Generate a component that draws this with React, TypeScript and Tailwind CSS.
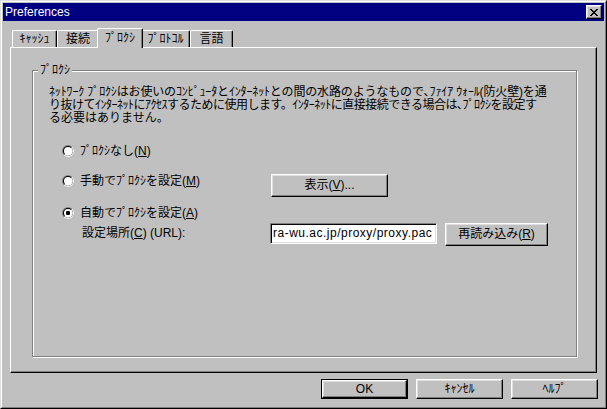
import React from 'react';

const font = "font-['Liberation_Sans','Noto_Sans_CJK_JP',sans-serif]";

// raised 3D button (Win9x style)
function Btn({ children, className = '', isDefault = false }: { children: React.ReactNode; className?: string; isDefault?: boolean }) {
  const face = (
    <div className="flex-1 flex items-center justify-center border border-t-white border-l-white border-r-black border-b-black bg-[#c0c0c0] shadow-[inset_-1px_-1px_0_#808080,inset_1px_1px_0_#dfdfdf] leading-[13px]">
      {children}
    </div>
  );
  if (isDefault) {
    return <div className={`flex border border-black ${className}`}>{face}</div>;
  }
  return <div className={`flex ${className}`}>{face}</div>;
}

function Radio({ checked = false }: { checked?: boolean }) {
  return (
    <svg width="12" height="12" viewBox="0 0 12 12" className="shrink-0">
      <defs>
        <clipPath id="radio-br">
          <polygon points="12,0 12,12 0,12" />
        </clipPath>
      </defs>
      <circle cx="6" cy="6" r="6" fill="#808080" />
      <circle cx="6" cy="6" r="6" fill="#ffffff" clipPath="url(#radio-br)" />
      <circle cx="6" cy="6" r="5" fill="#000000" />
      <circle cx="6" cy="6" r="5" fill="#dfdfdf" clipPath="url(#radio-br)" />
      <circle cx="6" cy="6" r="4" fill="#ffffff" />
      {checked && <rect x="4" y="4" width="4" height="4" rx="1.2" fill="#000000" />}
    </svg>
  );
}

const U = ({ c }: { c: string }) => <span className="underline underline-offset-[1px]">{c}</span>;

const tabs = [
  { label: 'ｷｬｯｼｭ', w: 'w-[45px]' },
  { label: '接続', w: 'w-[42px]' },
  { label: 'ﾌﾟﾛｸｼ', w: 'w-[46px]', active: true },
  { label: 'ﾌﾟﾛﾄｺﾙ', w: 'w-[49px]' },
  { label: '言語', w: 'w-[43px]' },
];

export default function App() {
  return (
    <div className={`w-[607px] h-[409px] bg-[#c0c0c0] text-[12px] text-black ${font} border border-t-[#dfdfdf] border-l-[#dfdfdf] border-r-black border-b-black`}>
      <div className="w-full h-full flex flex-col border border-t-white border-l-white border-r-[#808080] border-b-[#808080] p-px">
        {/* Title bar */}
        <div className="h-[18px] shrink-0 bg-[#000080] flex items-center justify-between pl-[2px] pr-[2px]">
          <span className="text-white text-[12px] leading-[14px]">Preferences</span>
          <div className="w-[16px] h-[14px] flex items-center justify-center border border-t-white border-l-white border-r-black border-b-black bg-[#c0c0c0] shadow-[inset_-1px_-1px_0_#808080,inset_1px_1px_0_#dfdfdf]">
            <svg width="8" height="7" viewBox="0 0 8 7" shapeRendering="crispEdges">
              <path
                fill="#000"
                d="M0 0h2v1H0zM6 0h2v1H6zM1 1h2v1H1zM5 1h2v1H5zM2 2h4v1H2zM3 3h2v1H3zM2 4h4v1H2zM1 5h2v1H1zM5 5h2v1H5zM0 6h2v1H0zM6 6h2v1H6z"
              />
            </svg>
          </div>
        </div>

        <div className="flex-1 flex flex-col px-[7px] pt-[7px]">
          {/* Tabs */}
          <div className="h-[19px] flex items-end pl-[2px]">
            {tabs.map((t) =>
              t.active ? (
                <div
                  key={t.label}
                  className={`${t.w} -mx-[2px] h-[20px] -mb-px relative z-10 bg-[#c0c0c0] border-t border-l border-r border-t-white border-l-white border-r-black rounded-t-[2px] shadow-[inset_-1px_0_0_#808080] flex items-center justify-center leading-[13px] pb-[1px]`}
                >
                  {t.label}
                </div>
              ) : (
                <div
                  key={t.label}
                  className={`${t.w} h-[17px] bg-[#c0c0c0] border-t border-l border-r border-t-white border-l-white border-r-black rounded-t-[2px] shadow-[inset_-1px_0_0_#808080] flex items-center justify-center leading-[13px]`}
                >
                  {t.label}
                </div>
              )
            )}
          </div>

          {/* Tab panel */}
          <div className="h-[326px] flex flex-col border border-t-white border-l-white border-r-black border-b-black shadow-[inset_-1px_-1px_0_#808080] pl-[21px] pt-[22px] pr-[19px] pb-[15px]">
            <div className="flex-1 relative border border-[#808080] shadow-[inset_1px_1px_0_#fff,1px_1px_0_#fff] pl-[16px] pt-[15px]">
              <span className="absolute left-[5px] top-[-7px] px-[2px] bg-[#c0c0c0] leading-[13px]">ﾌﾟﾛｸｼ</span>

              <div className="leading-[13px] whitespace-nowrap">
                <div className="tracking-[-0.15px]">ﾈｯﾄﾜｰｸ ﾌﾟﾛｸｼはお使いのｺﾝﾋﾟｭｰﾀとｲﾝﾀｰﾈｯﾄとの間の水路のようなもので､ﾌｧｲｱ ｳｫｰﾙ(防火壁)を通</div>
                <div className="tracking-[-0.5px]">り抜けてｲﾝﾀｰﾈｯﾄにｱｸｾｽするために使用します。ｲﾝﾀｰﾈｯﾄに直接接続できる場合は､ﾌﾟﾛｸｼを設定す</div>
                <div>る必要はありません。</div>
              </div>

              <div className="ml-[13px] mt-[16px] flex flex-col">
                <div className="h-[20px] flex items-center gap-[6px]">
                  <Radio />
                  <span className="leading-[13px]">
                    ﾌﾟﾛｸｼなし(<U c="N" />)
                  </span>
                </div>

                <div className="mt-[10px] flex items-start">
                  <div className="w-[209px] h-[20px] flex items-center gap-[6px]">
                    <Radio />
                    <span className="leading-[13px]">
                      手動でﾌﾟﾛｸｼを設定(<U c="M" />)
                    </span>
                  </div>
                  <Btn className="w-[117px] h-[23px] mt-[3px]">
                    表示(<U c="V" />)...
                  </Btn>
                </div>

                <div className="mt-[6px] h-[20px] flex items-center gap-[6px]">
                  <Radio checked />
                  <span className="leading-[13px]">
                    自動でﾌﾟﾛｸｼを設定(<U c="A" />)
                  </span>
                </div>

                <div className="flex items-start">
                  <div className="w-[208px] h-[21px] flex items-center pl-[20px] leading-[13px]">
                    設定場所(<U c="C" />) (URL):
                  </div>
                  <div className="w-[167px] h-[21px] bg-white border border-t-[#808080] border-l-[#808080] border-r-white border-b-white shadow-[inset_1px_1px_0_#000,inset_-1px_-1px_0_#dfdfdf] overflow-hidden flex items-center pl-[2px] whitespace-nowrap leading-[13px] tracking-[0.5px]">
                    ra-wu.ac.jp/proxy/proxy.pac
                  </div>
                  <Btn className="ml-[8px] w-[103px] h-[23px]">
                    再読み込み(<U c="R" />)
                  </Btn>
                </div>
              </div>
            </div>
          </div>

          {/* Bottom buttons */}
          <div className="mt-[6px] flex justify-end gap-[8px] -mr-px">
            <Btn isDefault className="w-[87px] h-[20px]">OK</Btn>
            <Btn className="w-[87px] h-[20px]">ｷｬﾝｾﾙ</Btn>
            <Btn className="w-[87px] h-[20px]">ﾍﾙﾌﾟ</Btn>
          </div>
        </div>
      </div>
    </div>
  );
}
